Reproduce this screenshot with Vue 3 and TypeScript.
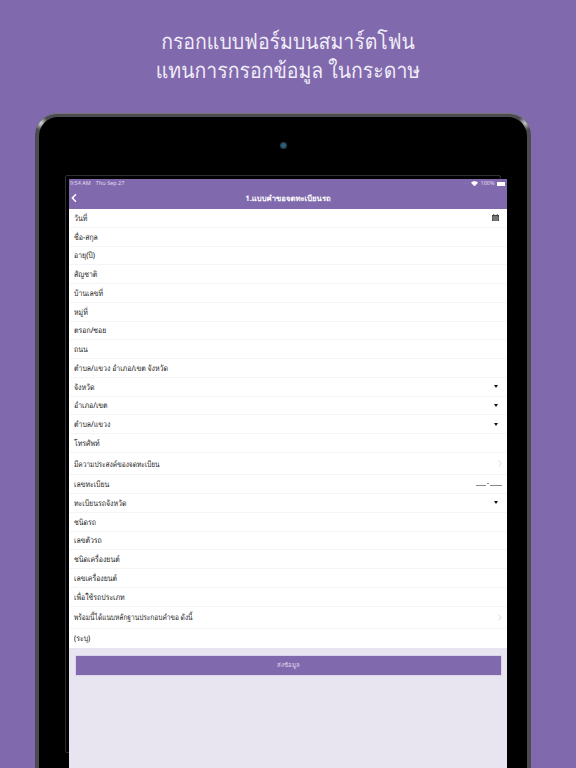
<script setup lang="ts">
type Row = { label: string; kind?: 'date' | 'drop' | 'chev' | 'plate'; tall?: boolean }
const rows: Row[] = [
  { label: 'วันที่', kind: 'date' },
  { label: 'ชื่อ-สกุล' },
  { label: 'อายุ(ปี)' },
  { label: 'สัญชาติ' },
  { label: 'บ้านเลขที่' },
  { label: 'หมู่ที่' },
  { label: 'ตรอก/ซอย' },
  { label: 'ถนน' },
  { label: 'ตำบล/แขวง อำเภอ/เขต จังหวัด' },
  { label: 'จังหวัด', kind: 'drop' },
  { label: 'อำเภอ/เขต', kind: 'drop' },
  { label: 'ตำบล/แขวง', kind: 'drop' },
  { label: 'โทรศัพท์' },
  { label: 'มีความประสงค์ของจดทะเบียน', kind: 'chev', tall: true },
  { label: 'เลขทะเบียน', kind: 'plate' },
  { label: 'ทะเบียนรถจังหวัด', kind: 'drop' },
  { label: 'ชนิดรถ' },
  { label: 'เลขตัวรถ' },
  { label: 'ชนิดเครื่องยนต์' },
  { label: 'เลขเครื่องยนต์' },
  { label: 'เพื่อใช้รถประเภท' },
  { label: 'พร้อมนี้ได้แนบหลักฐานประกอบคำขอ ดังนี้', kind: 'chev', tall: true },
  { label: '(ระบุ)' },
]
</script>

<template>
  <div class="page">
    <h1 class="title">
      <span>กรอกแบบฟอร์มบนสมาร์ตโฟน</span>
      <span>แทนการกรอกข้อมูล ในกระดาษ</span>
    </h1>
    <div class="device">
      <div class="camera"></div>
      <div class="frame">
        <div class="screen">
          <div class="status">
            <span class="status-left"><span>9:54 AM</span><span>Thu Sep 27</span></span>
            <span class="status-right">
              <span class="dots">····</span>
              <svg class="wifi" viewBox="0 0 12 9" width="7" height="5.5">
                <path d="M6 9 0 2.6C3.5-.8 8.5-.8 12 2.6z" fill="#fff" />
              </svg>
              <span>100%</span>
              <i class="battery"></i>
            </span>
          </div>
          <header class="nav">
            <svg class="back" viewBox="0 0 8 12" width="6" height="10">
              <path d="M6.6 1 1.8 6l4.8 5" fill="none" stroke="#fff" stroke-width="2" />
            </svg>
            <span class="nav-title">1.แบบคำขอจดทะเบียนรถ</span>
          </header>
          <ul class="list">
            <li v-for="row in rows" :key="row.label" class="row" :class="{ tall: row.tall }">
              <span class="label">{{ row.label }}</span>
              <svg v-if="row.kind === 'date'" class="cal" viewBox="0 0 8 8" width="7" height="7">
                <path d="M0 1h8v7H0zM1 3v4h6V3z" fill="#444" fill-rule="evenodd" />
                <path d="M1.5 0h1v2h-1zM5.500 0h1v2h-1z" fill="#444" />
                <path d="M1 3h6v4H1z" fill="#777" />
              </svg>
              <i v-else-if="row.kind === 'drop'" class="caret"></i>
              <svg v-else-if="row.kind === 'chev'" class="chev" viewBox="0 0 5 9" width="4" height="7">
                <path d="M.7.700 4 4.500.7 8.300" fill="none" stroke="#cfcfcf" stroke-width="1" />
              </svg>
              <span v-else-if="row.kind === 'plate'" class="plate">
                <i></i><b></b><i></i>
              </span>
            </li>
          </ul>
          <div class="footer">
            <button class="submit" type="button">ส่งข้อมูล</button>
          </div>
        </div>
      </div>
    </div>
  </div>
</template>

<style>
html, body { margin: 0; }
</style>

<style scoped>
.page {
  box-sizing: border-box;
  width: 576px;
  height: 768px;
  overflow: hidden;
  background: #8069ad;
  padding-top: 27px;
  font-family: "Noto Sans", "Liberation Sans", sans-serif;
  text-rendering: geometricPrecision;
}
.title {
  display: flex;
  flex-direction: column;
  align-items: center;
  margin: 0 0 27px;
  height: 59px;
  font-size: 22px;
  line-height: 29px;
  font-weight: 400;
  color: #f1edf8;
  transform: scaleX(.885);
}
.device {
  box-sizing: border-box;
  position: relative;
  width: 496px;
  height: 700px;
  margin-left: 35px;
  padding: 3px 4px 0;
  border-radius: 22px 22px 0 0;
  background:
    radial-gradient(circle at 6px 9px, #d8d8dc 0, rgba(216, 216, 220, 0) 7px),
    radial-gradient(circle at 490px 9px, #c4c4c8 0, rgba(196, 196, 200, 0) 7px),
    #4c4b52;
  border-top: 1px solid #77747c;
}
.device::before {
  content: "";
  position: absolute;
  inset: 3px 4px 0;
  border-radius: 19px 19px 0 0;
  background: #000;
}
.camera {
  position: absolute;
  left: 245px;
  top: 28px;
  width: 7px;
  height: 7px;
  border-radius: 50%;
  background: radial-gradient(circle, #2f6f94 0, #27475c 55%, #111 100%);
  z-index: 1;
}
.frame {
  position: relative;
  z-index: 1;
  box-sizing: border-box;
  margin: 58px 20px 0 27px;
  padding: 4px 0 0 3px;
  height: 640px;
}
.frame::before {
  content: "";
  position: absolute;
  left: -1px;
  top: 0;
  box-sizing: border-box;
  width: 436px;
  height: 578px;
  border: 1px solid #2e2e32;
  border-radius: 2px;
}
.screen {
  position: relative;
  background: #e8e4f0;
  height: 100%;
}
.status {
  display: flex;
  justify-content: space-between;
  align-items: center;
  height: 9px;
  padding: 0 2px 0 1px;
  background: #8069ad;
  color: #e6dff2;
  font-size: 5.500px;
  line-height: 9px;
}
.status-left {
  display: flex;
  gap: 5px;
}
.status-right {
  display: flex;
  align-items: center;
  gap: 2px;
}
.dots {
  color: #a897c8;
  letter-spacing: .5px;
}
.battery {
  display: block;
  width: 8.500px;
  height: 4px;
  background: #fff;
}
.nav {
  position: relative;
  display: flex;
  align-items: center;
  justify-content: center;
  height: 21px;
  background: #8069ad;
}
.back {
  position: absolute;
  left: 2px;
  top: 5px;
}
.nav-title {
  color: #fff;
  font-size: 7.700px;
  font-weight: 700;
}
.list {
  list-style: none;
  margin: 0;
  padding: 0;
  background: #fff;
}
.row {
  box-sizing: border-box;
  display: flex;
  align-items: center;
  justify-content: space-between;
  height: 18.750px;
  padding: 0 8px 0 5px;
  border-bottom: 1px solid #f5f4f6;
}
.row:last-child { border-bottom: 0; }
.tall { height: 22.500px; }
.label {
  display: block;
  margin-top: 2px;
  color: #1c1c1c;
  font-size: 8px;
  font-weight: 500;
  line-height: 10px;
  transform: scaleX(.87);
  transform-origin: left center;
}
.tall .label {
  transform: scaleX(.82);
  margin-left: -.5px;
}
.caret {
  width: 0;
  height: 0;
  margin-right: 1px;
  border-left: 2.500px solid transparent;
  border-right: 2.500px solid transparent;
  border-top: 3px solid #111;
}
.chev { margin-right: -3px; }
.plate {
  display: flex;
  align-items: center;
  gap: 1px;
  margin-right: -3px;
}
.plate i {
  display: block;
  width: 10px;
  height: 1px;
  background: #8a8a8a;
  margin-top: 2px;
}
.plate i:last-child { width: 12px; }
.plate b {
  display: block;
  width: 2px;
  height: 1px;
  background: #8a8a8a;
  margin-top: -2px;
}
.footer {
  padding: 8px 6px 0 7px;
}
.submit {
  display: block;
  width: 100%;
  height: 19px;
  padding: 0;
  border: 0;
  background: #8069ad;
  box-shadow: 0 0 0 .5px #cdbfe6;
  color: #e2daf0;
  font-family: inherit;
  font-size: 6px;
}
</style>
